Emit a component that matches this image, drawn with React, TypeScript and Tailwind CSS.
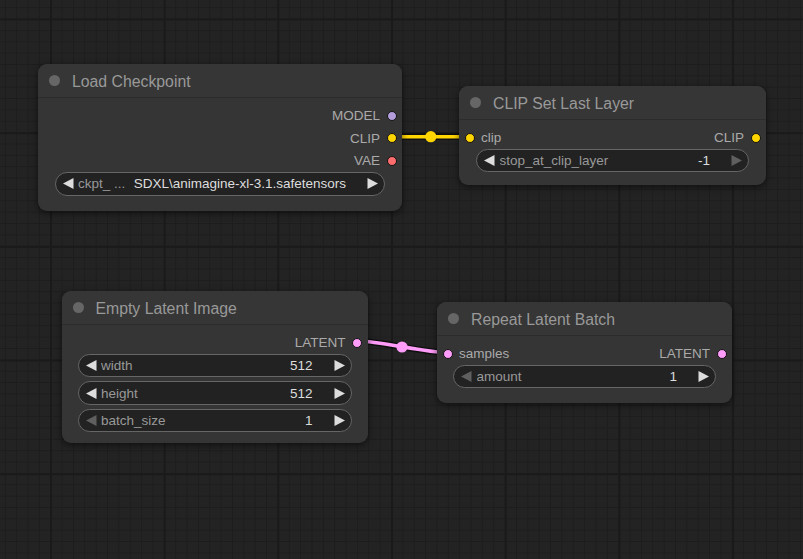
import type { ReactNode } from "react";

type Widget = {
  label: string;
  value: string;
  dimLeft?: boolean;
  dimRight?: boolean;
};

function Dot({ color }: { color: string }) {
  return (
    <span
      className="block h-[10px] w-[10px] shrink-0 rounded-full border border-[#111]"
      style={{ backgroundColor: color }}
    />
  );
}

function ArrowLeft({ dim }: { dim?: boolean }) {
  return (
    <svg width="11" height="11" viewBox="0 0 11 11" className="shrink-0">
      <path d="M0 5.5 L10.5 0 L10.5 11 Z" fill={dim ? "#5f5f5f" : "#dddddd"} />
    </svg>
  );
}

function ArrowRight({ dim }: { dim?: boolean }) {
  return (
    <svg width="11" height="11" viewBox="0 0 11 11" className="shrink-0">
      <path d="M11 5.5 L0.5 0 L0.5 11 Z" fill={dim ? "#5f5f5f" : "#dddddd"} />
    </svg>
  );
}

function NumberWidget({ w }: { w: Widget }) {
  return (
    <div className="flex h-[23.4px] items-center rounded-full border border-[#666] bg-[#222] text-[13.5px]">
      <span className="ml-[7px]">
        <ArrowLeft dim={w.dimLeft} />
      </span>
      <span className="relative top-[0.5px] ml-[4.5px] flex-1 truncate text-[#999]">{w.label}</span>
      <span className="relative top-[0.5px] mr-[21px] text-[#ddd]">{w.value}</span>
      <span className="mr-[6px]">
        <ArrowRight dim={w.dimRight} />
      </span>
    </div>
  );
}

function Node({
  pos,
  title,
  children,
}: {
  pos: string;
  title: string;
  children: ReactNode;
}) {
  return (
    <div
      className={
        "absolute overflow-hidden rounded-[9px] bg-[#353535] shadow-[0_2px_7px_rgba(0,0,0,0.55)] " +
        pos
      }
    >
      <div className="flex h-[34px] items-center border-b border-[#2c2c2c] bg-[#363636]">
        <span className="ml-[11px] h-[11px] w-[11px] rounded-full bg-[#666]" />
        <span className="relative top-[1px] ml-[12px] text-[15.8px] text-[#999]">{title}</span>
      </div>
      {children}
    </div>
  );
}

function OutRow({ label, color }: { label: string; color: string }) {
  return (
    <div className="flex h-[22.6px] items-center justify-end">
      <span className="relative top-[0.5px] text-[13.5px] text-[#aaa]">{label}</span>
      <span className="ml-[6.5px] mr-[5.5px]">
        <Dot color={color} />
      </span>
    </div>
  );
}

function IoRow({
  input,
  output,
  color,
}: {
  input: string;
  output: string;
  color: string;
}) {
  return (
    <div className="flex h-[22.6px] items-center">
      <span className="ml-[5.5px]">
        <Dot color={color} />
      </span>
      <span className="relative top-[0.5px] ml-[6.5px] flex-1 text-[13.5px] text-[#aaa]">{input}</span>
      <span className="relative top-[0.5px] text-[13.5px] text-[#aaa]">{output}</span>
      <span className="ml-[6.5px] mr-[5.5px]">
        <Dot color={color} />
      </span>
    </div>
  );
}

export default function App() {
  return (
    <div className="relative h-[559px] w-full overflow-hidden bg-[#232323] bg-[linear-gradient(to_right,#1a1a1a_1.5px,transparent_1.5px),linear-gradient(to_bottom,#1a1a1a_1.5px,transparent_1.5px),linear-gradient(to_right,#1d1d1d_1.2px,transparent_1.2px),linear-gradient(to_bottom,#1d1d1d_1.2px,transparent_1.2px)] bg-size-[113.7px_113.7px,113.7px_113.7px,11.37px_11.37px,11.37px_11.37px] bg-position-[50px_18.5px,50px_18.5px,4.8px_7.2px,4.8px_7.2px] font-['Liberation_Sans',Arial,sans-serif]">
      {/* links sit under the nodes */}
      <svg className="absolute inset-0 h-full w-full" width="803" height="559">
        <path d="M391.7 136.7 L470 136.7" stroke="rgba(0,0,0,0.55)" strokeWidth="6.5" fill="none" />
        <path d="M391.7 136.7 L470 136.7" stroke="#ffd500" strokeWidth="3.6" fill="none" />
        <circle cx="430.8" cy="136.7" r="5.6" fill="#ffd500" />
        <path
          d="M357.3 341 C380 341, 424.6 352.7, 447.3 352.7"
          stroke="rgba(0,0,0,0.55)"
          strokeWidth="6.5"
          fill="none"
        />
        <path
          d="M357.3 341 C380 341, 424.6 352.7, 447.3 352.7"
          stroke="#ff9cf9"
          strokeWidth="3.6"
          fill="none"
        />
        <circle cx="402" cy="347" r="5.6" fill="#ff9cf9" />
      </svg>

      <Node pos="left-[38px] top-[64px] w-[364px]" title="Load Checkpoint">
        <div className="pt-[6.5px] pb-[15px]">
          <OutRow label="MODEL" color="#b39ddb" />
          <OutRow label="CLIP" color="#ffd500" />
          <OutRow label="VAE" color="#ff6e6e" />
          <div className="mx-[17px] flex h-[23.4px] items-center rounded-full border border-[#666] bg-[#222] text-[13.5px]">
            <span className="ml-[7px]">
              <ArrowLeft />
            </span>
            <span className="relative top-[0.5px] ml-[4px] text-[#999]">ckpt_ ...</span>
            <span className="relative top-[0.5px] mr-[21px] flex-1 text-right text-[#ddd]">
              {"SDXL\\animagine-xl-3.1.safetensors"}
            </span>
            <span className="mr-[6px]">
              <ArrowRight />
            </span>
          </div>
        </div>
      </Node>

      <Node pos="left-[459px] top-[86px] w-[307px]" title="CLIP Set Last Layer">
        <div className="pt-[6.5px] pb-[13px]">
          <IoRow input="clip" output="CLIP" color="#ffd500" />
          <div className="mx-[17px]">
            <NumberWidget w={{ label: "stop_at_clip_layer", value: "-1", dimRight: true }} />
          </div>
        </div>
      </Node>

      <Node pos="left-[61.5px] top-[291px] w-[306px]" title="Empty Latent Image">
        <div className="pt-[6.5px] pb-[11px]">
          <OutRow label="LATENT" color="#ff9cf9" />
          <div className="mx-[16px] flex flex-col gap-[4px]">
            <NumberWidget w={{ label: "width", value: "512" }} />
            <NumberWidget w={{ label: "height", value: "512" }} />
            <NumberWidget w={{ label: "batch_size", value: "1", dimLeft: true }} />
          </div>
        </div>
      </Node>

      <Node pos="left-[437px] top-[302px] w-[295px]" title="Repeat Latent Batch">
        <div className="pt-[6.5px] pb-[15px]">
          <IoRow input="samples" output="LATENT" color="#ff9cf9" />
          <div className="mx-[16px]">
            <NumberWidget w={{ label: "amount", value: "1", dimLeft: true }} />
          </div>
        </div>
      </Node>
    </div>
  );
}
